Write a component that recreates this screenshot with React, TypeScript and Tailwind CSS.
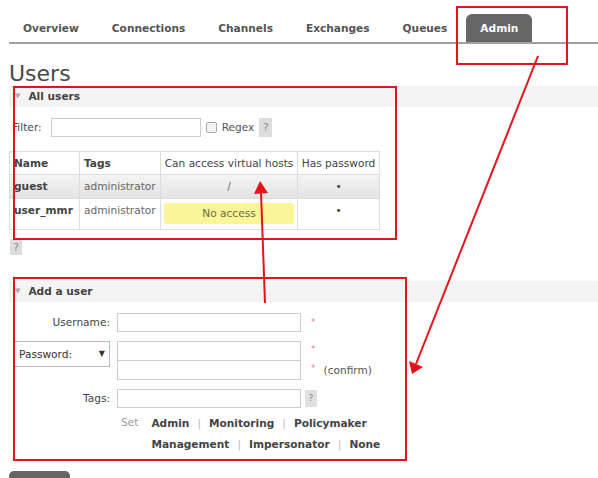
import React from "react";

const tabs = ["Overview", "Connections", "Channels", "Exchanges", "Queues"];

function SectionHead({ title }: { title: string }) {
  return (
    <div className="flex items-center h-[21px] bg-[#f4f4f4] pl-[6px]">
      <span className="text-[7px] text-[#aaa] leading-none mr-[8px]">▼</span>
      <span className="font-bold text-[#444]">{title}</span>
    </div>
  );
}

export default function App() {
  return (
    <div
      className="relative w-[598px] h-[478px] overflow-hidden bg-white text-[10.6px] text-[#484848] leading-none"
      style={{ fontFamily: '"DejaVu Sans", Verdana, sans-serif' }}
    >
      <div className="pl-[9px] pt-[14px]">
        {/* nav */}
        <div className="flex h-[30px] border-b-2 border-[#a0a0a0] items-end">
          {tabs.map((t) => (
            <div key={t} className="h-[28px] flex items-center px-[14px] mr-[5px] font-bold text-[#555]">
              {t}
            </div>
          ))}
          <div className="h-[28px] flex items-center px-[14px] rounded-t-[6px] bg-[#666] text-white font-bold">
            Admin
          </div>
        </div>

        <div className="text-[22px] text-[#484848] mt-[18px] h-[23px] leading-[23px]">Users</div>

        <div className="mt-[1px]">
          <SectionHead title="All users" />
          <div className="flex items-center mt-[11px] h-[19px] pl-[3px]">
            <span className="mr-[9px]">Filter:</span>
            <div className="w-[150px] h-[19px] border border-[#ccc]" />
            <div className="ml-[5px] w-[11px] h-[11px] border border-[#aaa] rounded-[2px] bg-[#f4f4f4]" />
            <span className="ml-[5px] text-[#555]">Regex</span>
            <span className="ml-[5px] w-[13px] h-[19px] bg-[#ddd] text-[#888] flex items-center justify-center">?</span>
          </div>

          <table className="mt-[14px] border-collapse text-[#444]">
            <tbody>
              <tr className="h-[23px]">
                <th className="w-[70px] border border-[#ddd] text-left px-[4px] font-bold">Name</th>
                <th className="w-[81px] border border-[#ddd] text-left px-[4px] font-bold">Tags</th>
                <th className="w-[137px] border border-[#ddd] text-center px-[3px] font-normal">Can access virtual hosts</th>
                <th className="w-[82px] border border-[#ddd] text-center px-[3px] font-normal">Has password</th>
              </tr>
              <tr className="h-[24px] bg-gradient-to-b from-[#f4f4f4] to-[#e2e2e2]">
                <td className="border border-[#ddd] px-[4px] font-bold">guest</td>
                <td className="border border-[#ddd] px-[4px] text-[#666]">administrator</td>
                <td className="border border-[#ddd] text-center text-[#666]">/</td>
                <td className="border border-[#ddd] text-center">•</td>
              </tr>
              <tr className="h-[31px]">
                <td className="border border-[#ddd] px-[4px] font-bold align-top pt-[6px]">user_mmr</td>
                <td className="border border-[#ddd] px-[4px] text-[#666] align-top pt-[6px]">administrator</td>
                <td className="border border-[#ddd] align-top px-[3px] pt-[4px] pb-[4px]">
                  <div className="h-[21px] rounded-[3px] bg-[#fbf59a] text-[#6b6b3a] flex items-center justify-center">
                    No access
                  </div>
                </td>
                <td className="border border-[#ddd] text-center align-top pt-[6px]">•</td>
              </tr>
            </tbody>
          </table>
          <div className="mt-[9px] ml-[1px] w-[12px] h-[16px] bg-[#ddd] text-[#888] flex items-center justify-center">?</div>
        </div>

        <div className="mt-[26px]">
          <SectionHead title="Add a user" />
          <div className="mt-[11px] flex flex-col">
            <div className="flex items-center h-[19px]">
              <div className="w-[101px] text-right text-[#444]">Username:</div>
              <div className="ml-[7px] w-[184px] h-[19px] border border-[#ccc]" />
              <span className="ml-[10px] text-[#f08080] text-[9px]">*</span>
            </div>
            <div className="flex items-start mt-[9px]">
              <div className="ml-[5px] w-[96px] h-[26px] border border-[#bbb] flex items-center justify-between px-[4px] text-[#333]">
                <span>Password:</span>
                <span className="text-[8px]">▼</span>
              </div>
              <div className="ml-[7px] flex flex-col">
                <div className="w-[184px] h-[20px] border border-[#ccc]" />
                <div className="w-[184px] h-[20px] border border-[#ccc] -mt-px" />
              </div>
              <div className="ml-[10px] flex flex-col">
                <span className="h-[19px] pt-[4px] text-[#f08080] text-[9px]">*</span>
                <span className="h-[19px] pt-[4px] flex items-start">
                  <span className="text-[#f08080] text-[9px]">*</span>
                  <span className="ml-[8px] text-[#555] mt-[1px]">(confirm)</span>
                </span>
              </div>
            </div>
            <div className="flex items-center h-[19px] mt-[9px]">
              <div className="w-[101px] text-right text-[#444]">Tags:</div>
              <div className="ml-[7px] w-[184px] h-[19px] border border-[#ccc]" />
              <span className="ml-[4px] w-[12px] h-[17px] bg-[#e0e0e0] text-[#888] text-[9px] flex items-center justify-center">?</span>
            </div>
            <div className="flex mt-[10px] ml-[112px]">
              <span className="text-[#999] mt-[-1px] mr-[13px]">Set</span>
              <div className="flex flex-col gap-[10px] font-bold text-[#444]">
                <div className="flex">
                  <span>Admin</span>
                  <span className="mx-[8px] text-[#bbb] font-normal">|</span>
                  <span>Monitoring</span>
                  <span className="mx-[8px] text-[#bbb] font-normal">|</span>
                  <span>Policymaker</span>
                </div>
                <div className="flex">
                  <span>Management</span>
                  <span className="mx-[8px] text-[#bbb] font-normal">|</span>
                  <span>Impersonator</span>
                  <span className="mx-[8px] text-[#bbb] font-normal">|</span>
                  <span>None</span>
                </div>
              </div>
            </div>
          </div>
        </div>

        <div className="mt-[22px] w-[61px] h-[20px] bg-[#666] rounded-t-[5px]" />
      </div>

      {/* annotations */}
      <div className="absolute left-[456px] top-[6px] w-[112px] h-[59px] border-2 border-[#e3141b]" />
      <div className="absolute left-[13px] top-[86px] w-[384px] h-[154px] border-2 border-[#e3141b]" />
      <div className="absolute left-[13px] top-[277px] w-[394px] h-[184px] border-2 border-[#e3141b]" />
      <svg className="absolute left-0 top-0 pointer-events-none" width="598" height="478">
        <line x1="265" y1="303" x2="261" y2="192" stroke="#e3141b" strokeWidth="2" />
        <polygon points="260,181 254,194 268,193" fill="#e3141b" />
        <line x1="538" y1="56" x2="416" y2="364" stroke="#e3141b" strokeWidth="2" />
        <polygon points="412,374 409,361 423,367" fill="#e3141b" />
      </svg>
    </div>
  );
}
